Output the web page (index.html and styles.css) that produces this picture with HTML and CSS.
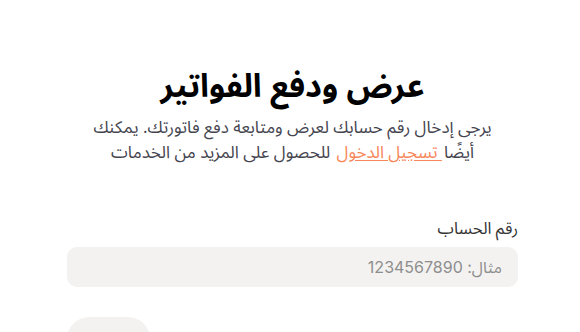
FILE: index.html
```html
<!DOCTYPE html>
<html lang="ar" dir="rtl">
<head>
<meta charset="utf-8">
<link rel="stylesheet" href="styles.css">
</head>
<body>
<main class="page">
  <h1 class="title">عرض ودفع الفواتير</h1>
  <p class="intro">يرجى إدخال رقم حسابك لعرض ومتابعة دفع فاتورتك. يمكنك أيضًا<a class="link" href="#"> تسجيل الدخول</a> للحصول على المزيد من الخدمات</p>
  <form class="form">
    <label class="label" for="acc">رقم الحساب</label>
    <input class="input" id="acc" type="text" placeholder="مثال: 1234567890">
    <div class="actions">
      <button class="btn" type="button">متابعة</button>
    </div>
  </form>
</main>
</body>
</html>
```
FILE: styles.css
```css
html, body {
  margin: 0;
  padding: 0;
  background: #ffffff;
}
body {
  font-family: "Noto Sans", "Noto Sans Arabic", sans-serif;
  color: #1a1a1a;
  overflow: hidden;
}
.page {
  width: 451px;
  margin: 0 62px 0 67px;
  padding-top: 60px;
  text-align: center;
}
.title {
  margin: 0;
  font-size: 32.5px;
  font-weight: 700;
  line-height: 50px;
  color: #000;
}
.intro {
  margin: 4px 0 0;
  padding: 0 10px;
  font-size: 17px;
  line-height: 25px;
  color: #45454f;
}
.link {
  margin: 0 2px;
  color: #f7875a;
  text-decoration: underline;
  text-underline-offset: 2px;
}
.form {
  margin-top: 54px;
  text-align: right;
}
.label {
  display: block;
  font-size: 16.5px;
  line-height: 20px;
  color: #333;
  margin-bottom: 9px;
}
.input {
  display: block;
  box-sizing: border-box;
  width: 100%;
  height: 40px;
  border: none;
  border-radius: 10px;
  background: #f3f2f0;
  padding: 0 16px;
  font-family: Inter, "Noto Sans Arabic", sans-serif;
  font-size: 16px;
  direction: rtl;
  outline: none;
}
.input::placeholder {
  color: #8e8e8e;
}
.actions {
  display: flex;
  justify-content: flex-end;
  margin-top: 30px;
}
.btn {
  width: 83px;
  height: 50px;
  padding-top: 4px;
  border: none;
  border-radius: 22px;
  background: #f3f2f0;
  color: #999;
  font-family: "Noto Sans", "Noto Sans Arabic", sans-serif;
  font-size: 15px;
}
```
